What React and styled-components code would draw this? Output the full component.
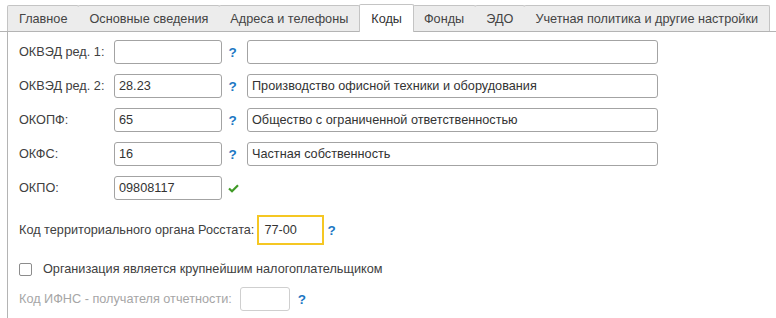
import React from 'react';
import styled, { createGlobalStyle } from 'styled-components';

const GlobalStyle = createGlobalStyle`
  html, body {
    margin: 0;
    padding: 0;
    background: #fff;
    font-family: "Liberation Sans", Arial, sans-serif;
    font-size: 12.7px;
    color: #404040;
  }
`;

const Page = styled.div`
  width: 776px;
  height: 318px;
  overflow: hidden;
  padding-top: 4px;
  box-sizing: border-box;
`;

const TabStrip = styled.div`
  display: flex;
  align-items: flex-end;
  padding-left: 7px;
  border-bottom: 1px solid #b4b4b4;
  height: 27px;
`;

const Tab = styled.div`
  display: flex;
  align-items: center;
  padding: 0 11px;
  height: ${(p) => (p.$active ? '27px' : '25px')};
  margin-bottom: ${(p) => (p.$active ? '-1px' : '0')};
  border: 1px solid #c4c4c4;
  border-left: ${(p) => (p.$first || p.$active ? '1px solid #c4c4c4' : 'none')};
  border-bottom: none;
  border-radius: 2px 2px 0 0;
  background: ${(p) => (p.$active ? '#fff' : '#ececec')};
  color: ${(p) => (p.$active ? '#333' : '#444')};
  white-space: nowrap;
  position: relative;
  z-index: ${(p) => (p.$active ? 1 : 0)};
  & + & {
    margin-left: ${(p) => (p.$active ? '-1px' : '0')};
  }
`;

const Panel = styled.div`
  border-left: 1px solid #b4b4b4;
  margin-left: 7px;
  height: 287px;
  padding: 8px 0 0 11px;
  box-sizing: border-box;
`;

const CodeGrid = styled.div`
  display: grid;
  grid-template-columns: 95px 108px 25px 411px;
  grid-auto-rows: 24px;
  row-gap: 10px;
  align-items: center;
`;

const Label = styled.span`
  color: ${(p) => (p.$muted ? '#a6a6a6' : '#404040')};
  white-space: nowrap;
`;

const Field = styled.div`
  height: ${(p) => (p.$focused ? '30px' : '24px')};
  width: ${(p) => (p.$w ? `${p.$w}px` : 'auto')};
  box-sizing: border-box;
  border: ${(p) => (p.$focused ? '2px solid #f5c723' : `1px solid ${p.$muted ? '#cfcfcf' : '#a3a3a3'}`)};
  border-radius: ${(p) => (p.$focused ? '0' : '3px')};
  background: #fff;
  display: flex;
  align-items: center;
  padding: 0 ${(p) => (p.$focused ? '5px' : '4px')};
  color: #333;
  white-space: nowrap;
  overflow: hidden;
`;

const Help = styled.span`
  color: #1c77c3;
  font-weight: bold;
  font-size: 13.5px;
  text-align: center;
  padding-right: 4px;
`;

const CheckMark = styled.span`
  display: flex;
  justify-content: center;
  padding-right: 2px;
`;

const Row = styled.div`
  display: flex;
  align-items: center;
  gap: ${(p) => p.$gap || 3}px;
  margin-top: ${(p) => p.$top || 0}px;
`;

const Box = styled.span`
  width: 13px;
  height: 13px;
  box-sizing: border-box;
  border: 1px solid #8c8c8c;
  border-radius: 2px;
  background: #fff;
`;

const CheckText = styled.span`
  color: #404040;
  margin-left: 8px;
`;

const tabs = [
  'Главное',
  'Основные сведения',
  'Адреса и телефоны',
  'Коды',
  'Фонды',
  'ЭДО',
  'Учетная политика и другие настройки',
];

const codes = [
  { label: 'ОКВЭД ред. 1:', code: '', name: '' },
  { label: 'ОКВЭД ред. 2:', code: '28.23', name: 'Производство офисной техники и оборудования' },
  { label: 'ОКОПФ:', code: '65', name: 'Общество с ограниченной ответственностью' },
  { label: 'ОКФС:', code: '16', name: 'Частная собственность' },
];

const Check = () => (
  <svg width="11" height="9" viewBox="0 0 11 9">
    <path d="M1 4.5 L4 7.2 L10 1.2" fill="none" stroke="#3f9a26" strokeWidth="2.2" />
  </svg>
);

export default function App() {
  return (
    <Page>
      <GlobalStyle />
      <TabStrip>
        {tabs.map((t, i) => (
          <Tab key={t} $first={i === 0} $active={t === 'Коды'}>{t}</Tab>
        ))}
      </TabStrip>
      <Panel>
        <CodeGrid>
          {codes.map((c) => (
            <React.Fragment key={c.label}>
              <Label>{c.label}</Label>
              <Field>{c.code}</Field>
              <Help>?</Help>
              <Field>{c.name}</Field>
            </React.Fragment>
          ))}
          <Label>ОКПО:</Label>
          <Field>09808117</Field>
          <CheckMark><Check /></CheckMark>
        </CodeGrid>
        <Row $top={15}>
          <Label>Код территориального органа Росстата:</Label>
          <Field $focused $w={67}>77-00</Field>
          <Help>?</Help>
        </Row>
        <Row $top={17} $gap={0}>
          <Box />
          <CheckText>Организация является крупнейшим налогоплательщиком</CheckText>
        </Row>
        <Row $top={11} $gap={8}>
          <Label $muted>Код ИФНС - получателя отчетности:</Label>
          <Field $muted $w={50} />
          <Help>?</Help>
        </Row>
      </Panel>
    </Page>
  );
}
